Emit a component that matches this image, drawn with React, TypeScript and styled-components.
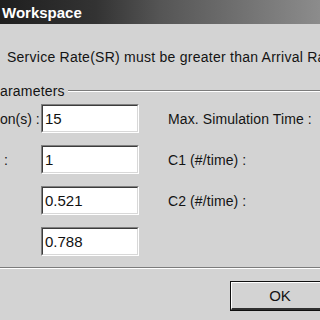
import React from "react";
import styled, { createGlobalStyle } from "styled-components";

const Global = createGlobalStyle`
  html, body { margin: 0; padding: 0; background: #d3d3d3; }
  body { width: 320px; height: 320px; overflow: hidden; font-family: "Liberation Sans", Arial, sans-serif; }
`;

const Window = styled.div`
  width: 320px;
  height: 320px;
  overflow: hidden;
  background: #d3d3d3;
  color: #141414;
  font-size: 14px;
`;

const TitleBar = styled.div`
  height: 24px;
  display: flex;
  align-items: center;
  padding-left: 2px;
  background: linear-gradient(to right, #1f1f1f 0%, #333333 30%, #555555 50%, #8c8c8c 100%);
  color: #fff;
  font-weight: bold;
  font-size: 15px;
  box-sizing: border-box;
`;

const Message = styled.div`
  margin-top: 25px;
  padding-left: 7px;
  line-height: 16px;
  letter-spacing: 0.25px;
  white-space: nowrap;
  overflow: hidden;
`;

const Group = styled.div`
  margin-top: 18px;
  border-bottom: 1px solid #ffffff;
`;

const GroupInner = styled.div`
  border-bottom: 1px solid #7c7c7c;
  padding-bottom: 11px;
`;

const GroupHeader = styled.div`
  display: flex;
  align-items: center;
  height: 16px;
  line-height: 16px;
`;

const Legend = styled.span`
  white-space: nowrap;
  padding-right: 3px;
  letter-spacing: 0.2px;
`;

const Rule = styled.div`
  flex: 1;
  height: 0;
  border-top: 1px solid #7c7c7c;
  border-bottom: 1px solid #ffffff;
`;

const Rows = styled.div`
  margin-top: 5px;
  display: flex;
  flex-direction: column;
  gap: 12px;
`;

const Row = styled.div`
  display: grid;
  grid-template-columns: 41px 98px 1fr;
  align-items: center;
  height: 29px;
`;

const Label = styled.span<{ $indent?: number }>`
  padding-left: ${(p) => p.$indent ?? 0}px;
  white-space: nowrap;
`;

const SideLabel = styled.span`
  padding-left: 29px;
  white-space: nowrap;
  letter-spacing: 0.1px;
`;

const Field = styled.div`
  box-sizing: border-box;
  height: 29px;
  background: #fff;
  border-top: 1px solid #808080;
  border-left: 1px solid #808080;
  border-right: 1px solid #ffffff;
  border-bottom: 1px solid #ffffff;
  display: flex;
`;

const FieldInner = styled.div`
  flex: 1;
  border-top: 1px solid #3c3c3c;
  border-left: 1px solid #3c3c3c;
  border-right: 1px solid #d8d8d8;
  border-bottom: 1px solid #d8d8d8;
  display: flex;
  align-items: center;
  padding-left: 2px;
  font-size: 15px;
  color: #111;
`;

const ButtonRow = styled.div`
  display: flex;
  padding-left: 230px;
  margin-top: 12px;
`;

const Button = styled.div`
  box-sizing: border-box;
  flex: 0 0 100px;
  height: 30px;
  border: 1px solid #101010;
  display: flex;
`;

const ButtonFace = styled.div`
  flex: 1;
  border-top: 1px solid #ffffff;
  border-left: 1px solid #ffffff;
  border-right: 1px solid #101010;
  border-bottom: 2px solid #303030;
  display: flex;
  align-items: center;
  justify-content: center;
  font-size: 15px;
`;

const rows = [
  { label: "on(s) :", indent: 0, value: "15", side: "Max. Simulation Time :" },
  { label: ":", indent: 4, value: "1", side: "C1 (#/time) :" },
  { label: "", indent: 0, value: "0.521", side: "C2 (#/time) :" },
  { label: "", indent: 0, value: "0.788", side: "" },
];

export default function App() {
  return (
    <>
      <Global />
      <Window>
        <TitleBar>Workspace</TitleBar>
        <Message>Service Rate(SR) must be greater than Arrival Ra</Message>
        <Group>
          <GroupInner>
            <GroupHeader>
              <Legend>arameters</Legend>
              <Rule />
            </GroupHeader>
            <Rows>
              {rows.map((r, i) => (
                <Row key={i}>
                  <Label $indent={r.indent}>{r.label}</Label>
                  <Field>
                    <FieldInner>{r.value}</FieldInner>
                  </Field>
                  <SideLabel>{r.side}</SideLabel>
                </Row>
              ))}
            </Rows>
          </GroupInner>
        </Group>
        <ButtonRow>
          <Button>
            <ButtonFace>OK</ButtonFace>
          </Button>
        </ButtonRow>
      </Window>
    </>
  );
}
